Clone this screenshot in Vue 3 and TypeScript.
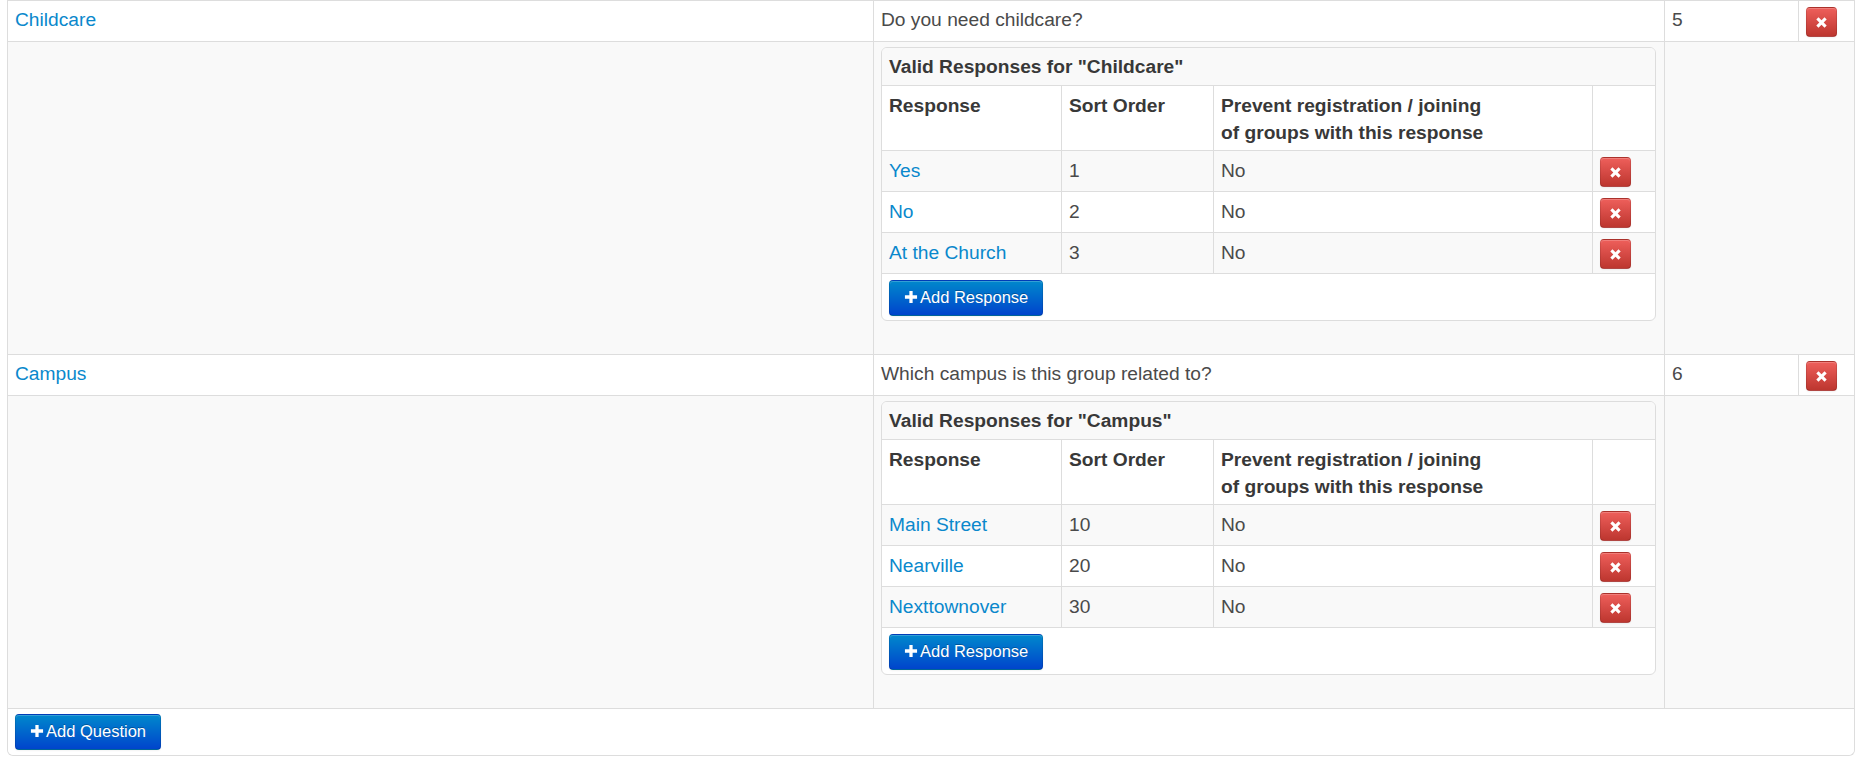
<script setup lang="ts">
interface Resp { name: string; order: number; prevent: string }
interface Question { name: string; text: string; order: number; responses: Resp[] }
const questions: Question[] = [
  { name: 'Childcare', text: 'Do you need childcare?', order: 5, responses: [
    { name: 'Yes', order: 1, prevent: 'No' },
    { name: 'No', order: 2, prevent: 'No' },
    { name: 'At the Church', order: 3, prevent: 'No' },
  ] },
  { name: 'Campus', text: 'Which campus is this group related to?', order: 6, responses: [
    { name: 'Main Street', order: 10, prevent: 'No' },
    { name: 'Nearville', order: 20, prevent: 'No' },
    { name: 'Nexttownover', order: 30, prevent: 'No' },
  ] },
]
</script>

<template>
  <div class="page">
    <table class="tbl outer">
      <colgroup>
        <col style="width: 865px" /><col style="width: 791px" /><col style="width: 134px" /><col style="width: 56px" />
      </colgroup>
      <tbody>
        <template v-for="q in questions" :key="q.name">
          <tr class="qrow">
            <td><a href="#">{{ q.name }}</a></td>
            <td>{{ q.text }}</td>
            <td>{{ q.order }}</td>
            <td>
              <button class="btn danger" type="button">
                <svg viewBox="0 0 12 12" width="13" height="13"><path d="M3.2 1.2 6 4l2.800-2.800 2 2L8 6l2.800 2.800-2 2L6 8l-2.800 2.800-2-2L4 6 1.200 3.200z" fill="#fff" /></svg>
              </button>
            </td>
          </tr>
          <tr class="subrow">
            <td></td>
            <td class="panelcell">
              <div class="panel">
                <div class="panelhead">Valid Responses for "{{ q.name }}"</div>
                <table class="tbl inner">
                  <colgroup>
                    <col style="width: 179px" /><col style="width: 152px" /><col style="width: 379px" /><col style="width: 63px" />
                  </colgroup>
                  <thead>
                    <tr class="headrow">
                      <th>Response</th>
                      <th>Sort Order</th>
                      <th>Prevent registration / joining<br />of groups with this response</th>
                      <th></th>
                    </tr>
                  </thead>
                  <tbody>
                    <tr v-for="r in q.responses" :key="r.name" class="resp">
                      <td><a href="#">{{ r.name }}</a></td>
                      <td>{{ r.order }}</td>
                      <td>{{ r.prevent }}</td>
                      <td>
                        <button class="btn danger" type="button">
                          <svg viewBox="0 0 12 12" width="13" height="13"><path d="M3.2 1.2 6 4l2.800-2.800 2 2L8 6l2.800 2.800-2 2L6 8l-2.800 2.800-2-2L4 6 1.200 3.200z" fill="#fff" /></svg>
                        </button>
                      </td>
                    </tr>
                  </tbody>
                </table>
                <div class="panelfoot">
                  <button class="btn primary" type="button">
                    <svg viewBox="0 0 12 12" width="14" height="14"><path d="M4.600 0.800h2.800v3.800h3.800v2.800H7.400v3.800H4.600V7.400H0.800V4.600h3.800z" fill="#fff" /></svg>
                    <span>Add Response</span>
                  </button>
                </div>
              </div>
            </td>
            <td colspan="2"></td>
          </tr>
        </template>
        <tr class="footrow">
          <td colspan="4">
            <button class="btn primary" type="button">
              <svg viewBox="0 0 12 12" width="14" height="14"><path d="M4.600 0.800h2.800v3.800h3.800v2.800H7.400v3.800H4.600V7.400H0.800V4.600h3.800z" fill="#fff" /></svg>
              <span>Add Question</span>
            </button>
          </td>
        </tr>
      </tbody>
    </table>
  </div>
</template>

<style scoped>
.page {
  padding: 0 6px 4px 7px;
  font-family: "Liberation Sans", Arial, sans-serif;
  font-size: 19.2px;
  line-height: 27px;
  color: #4a4a4a;
}
.tbl {
  border-collapse: separate;
  border-spacing: 0;
  table-layout: fixed;
  width: 100%;
}
.outer {
  width: 1847px;
  border: 1px solid #ddd;
  border-top: 0;
  border-radius: 0 0 6px 6px;
}
a {
  color: #0a88cc;
  text-decoration: none;
}
td, th {
  padding: 0 7px;
  text-align: left;
  vertical-align: top;
  border-top: 1px solid #ddd;
  border-left: 1px solid #ddd;
}
tr > td:first-child, tr > th:first-child {
  border-left: 0;
}
.qrow td {
  height: 41px;
  box-sizing: border-box;
  padding-top: 5px;
  background: #fff;
}
.qrow td:last-child {
  padding-top: 6px;
}
.subrow > td {
  background: #f9f9f9;
  height: 313px;
  box-sizing: border-box;
  padding: 0;
}
.subrow > td.panelcell {
  padding: 5px 8px 0 7px;
}
.panel {
  background: #fff;
  border: 1px solid #ddd;
  border-radius: 6px;
  overflow: hidden;
}
.panelhead {
  height: 37px;
  box-sizing: border-box;
  padding: 5px 7px 0;
  background: #f9f9f9;
  font-weight: 700;
  color: #383838;
}
.inner {
  width: 100%;
}
.inner th {
  height: 65px;
  box-sizing: border-box;
  padding-top: 6px;
  color: #383838;
  font-weight: 700;
  background: #fff;
}
.resp td {
  height: 41px;
  box-sizing: border-box;
  padding-top: 6px;
  background: #f9f9f9;
}
.resp:nth-child(2) td {
  background: #fff;
}
.panelfoot {
  height: 47px;
  box-sizing: border-box;
  border-top: 1px solid #ddd;
  padding: 6px 7px 0;
}
.btn {
  display: inline-flex;
  align-items: center;
  justify-content: center;
  border-radius: 4px;
  padding: 0;
  font-family: inherit;
  cursor: pointer;
  color: #fff;
  vertical-align: top;
  text-shadow: 0 -1px 0 rgba(0, 0, 0, 0.25);
}
.danger {
  width: 31px;
  height: 30px;
  background: linear-gradient(to bottom, #ee5f5b, #bd362f);
  border: 1px solid rgba(0, 0, 0, 0.1);
  border-bottom-color: rgba(0, 0, 0, 0.25);
  box-shadow: inset 0 1px 0 rgba(255, 255, 255, 0.2), 0 1px 2px rgba(0, 0, 0, 0.05);
}
.primary {
  height: 36px;
  padding: 0 14px 2px;
  gap: 2px;
  font-size: 16.5px;
  background: linear-gradient(to bottom, #0088cc, #0044cc);
  border: 1px solid rgba(0, 0, 0, 0.1);
  border-bottom-color: rgba(0, 0, 0, 0.25);
  box-shadow: inset 0 1px 0 rgba(255, 255, 255, 0.2), 0 1px 2px rgba(0, 0, 0, 0.05);
}
.footrow td {
  height: 47px;
  box-sizing: border-box;
  padding: 5px 7px 0;
  background: #fff;
  border-radius: 0 0 6px 6px;
}
</style>
